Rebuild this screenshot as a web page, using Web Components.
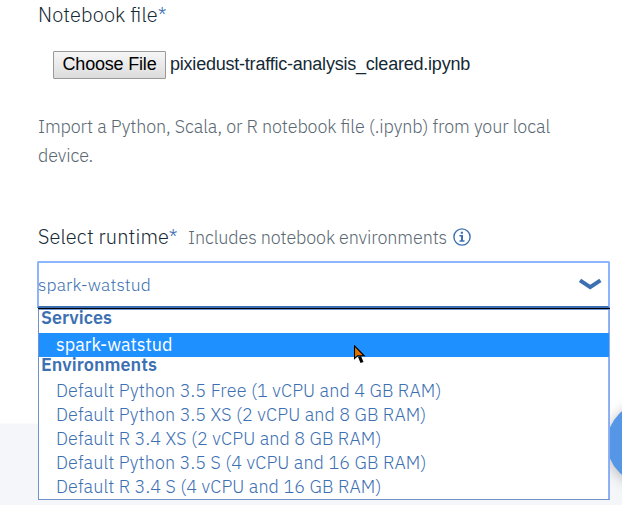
<!DOCTYPE html>
<html lang="en">
<head>
<meta charset="utf-8">
<title>New notebook</title>
<style>
html,body{margin:0;height:100%;overflow:hidden;background:#fff}
body{font-family:"IBM Plex Sans",Roboto,"Liberation Sans",sans-serif;font-weight:300;color:#152935;font-feature-settings:"liga" 1}
</style>
</head>
<body>
<notebook-form></notebook-form>
<script>
// Single line of text whose letter spacing is adjusted to fill a given width.
class FitText extends HTMLElement{
  constructor(){
    super();
    this.attachShadow({mode:'open'}).innerHTML=`<style>:host{display:inline-block;white-space:pre}span{display:inline-block}</style><span><slot></slot></span>`;
  }
  connectedCallback(){
    const s=this.shadowRoot.querySelector('span');
    const n=this.textContent.length,w=+this.getAttribute('width');
    if(w){
      s.style.letterSpacing=((w-s.getBoundingClientRect().width)/n)+'px';
      this.style.width=w+'px';
    }
  }
}
class FilePicker extends HTMLElement{
  constructor(){
    super();
    this.attachShadow({mode:'open'}).innerHTML=`<style>
:host{display:flex;align-items:center;gap:4px;font:400 18px/28px "Liberation Sans",Arial,sans-serif;color:#152935}
button{box-sizing:border-box;width:113px;height:28px;padding:0 0 2px;border:1px solid #999;border-radius:1px;background:linear-gradient(#f6f6f6,#dcdcdc);font:inherit;line-height:24px;color:#000}
fit-text{margin-top:-2px}button fit-text{margin-top:0}
</style><button><fit-text width="94">Choose File</fit-text></button><fit-text width="300">pixiedust-traffic-analysis_cleared.ipynb</fit-text>`;
  }
}
class FieldLabel extends HTMLElement{
  constructor(){
    super();
    this.attachShadow({mode:'open'}).innerHTML=`<style>
:host{display:flex;align-items:baseline;font-size:20px;line-height:30px;color:#152935}
i{font-style:normal;color:#3d70b2;width:10px;font-size:20px;font-weight:300}
::slotted([slot=hint]){margin-left:9px;font-size:18px;color:#5a6872}
</style><slot></slot><i>*</i><slot name="hint"></slot><slot name="icon"></slot>`;
  }
}
class InfoIcon extends HTMLElement{
  constructor(){
    super();
    this.attachShadow({mode:'open'}).innerHTML=`<style>:host{display:block;align-self:center;width:18px;height:18px;margin:-2px 0 0 6px}svg{display:block}</style>
<svg width="18" height="18" viewBox="0 0 18 18"><circle cx="9" cy="9" r="8.1" fill="none" stroke="#3d70b2" stroke-width="1.4"/><path d="M7.8 3.8h2.2v2H7.8zM6.4 7.1H10v5.2h1.5v1.4h-5v-1.4H8V8.5H6.4z" fill="#3d70b2"/></svg>`;
  }
}
class OptionRow extends HTMLElement{
  constructor(){
    super();
    this.attachShadow({mode:'open'}).innerHTML=`<style>
:host{display:block;height:24px;line-height:24px;padding-left:17px;color:#3d70b2}
:host([selected]){background:#1e90ff;color:#fff;font-weight:400}
</style><slot></slot>`;
  }
}
class OptionGroup extends HTMLElement{
  constructor(){
    super();
    this.attachShadow({mode:'open'}).innerHTML=`<style>
:host{display:block}
header{height:var(--head,23px);line-height:16px;padding-left:2px;font-weight:600;color:#3d70b2}
</style><header><slot name="title"></slot></header><slot></slot>`;
  }
}
class RuntimeSelect extends HTMLElement{
  constructor(){
    super();
    this.attachShadow({mode:'open'}).innerHTML=`<style>
:host{display:block;width:573px;font-size:18px;color:#3d70b2}
.value{box-sizing:border-box;height:47px;border:2px solid #8cb4ff;border-bottom-color:#3d70b2;border-radius:2px 2px 0 0;display:flex;align-items:center;justify-content:space-between;padding:0 6px 0 0;background:#fff}
.value fit-text{margin-left:-1px;font-size:17.5px}
svg{display:block}
.list{box-sizing:border-box;margin-left:1px;height:191px;border:1px solid #6f93ca;box-shadow:inset -1px 0 #8cb4ff;background:#fff;border-right-color:#8cabe8}
.rule{height:1px;background:#000;margin-left:1px}
</style>
<div class="value"><fit-text width="113">spark-watstud</fit-text>
<svg width="24" height="14" viewBox="0 0 24 14"><path d="M2 2.3 12.2 9.2 22.4 2.3" fill="none" stroke="#3d70b2" stroke-width="4"/></svg></div>
<div class="rule"></div><div class="list"><slot></slot></div>`;
  }
}
class MousePointer extends HTMLElement{
  constructor(){
    super();
    this.attachShadow({mode:'open'}).innerHTML=`<style>:host{position:absolute;left:354px;top:345px}svg{display:block}</style>
<svg width="12" height="20" viewBox="0 0 12 20"><path d="M5.5 11.5 8 17.5" stroke="#000" stroke-width="3.2"/><path d="M.5.8V13.5L3.6 10.8H10.2Z" fill="#e07000" stroke="#000" stroke-width="1.1"/></svg>`;
  }
}
class NotebookForm extends HTMLElement{
  constructor(){
    super();
    this.attachShadow({mode:'open'}).innerHTML=`<style>
:host{display:flex;flex-direction:column;position:relative;width:622px;height:505px;overflow:hidden}
main{height:425px;flex:none;padding:0 0 0 38px;box-sizing:border-box}
footer{flex:1;background:#f4f6fa;box-shadow:0 -1px 2px #f0f2f8}
file-picker{margin:21px 0 0 15px}
p{margin:33px 0 0;font-size:18px;line-height:29px;color:#5a6872}
p fit-text{display:block}
.runtime{margin-top:52px}
runtime-select{position:relative;z-index:2;margin:8px 0 0 -1px}
.chat{position:absolute;z-index:1;left:607px;top:402px;width:82px;height:82px;border-radius:50%;background:#5596e6;box-shadow:0 2px 14px #0004}
mouse-pointer{z-index:3}
.services{--head:23px}.env{--head:22px}
</style>
<main>
<field-label><fit-text width="120">Notebook file</fit-text></field-label>
<file-picker></file-picker>
<p><fit-text width="512">Import a Python, Scala, or R notebook file (.ipynb) from your local</fit-text><fit-text width="55">device.</fit-text></p>
<field-label class="runtime"><fit-text width="131">Select runtime</fit-text><fit-text slot="hint" width="259">Includes notebook environments</fit-text><info-icon slot="icon"></info-icon></field-label>
<runtime-select>
<option-group class="services"><fit-text slot="title" width="71">Services</fit-text><option-row selected><fit-text width="116.5">spark-watstud</fit-text></option-row></option-group>
<option-group class="env"><fit-text slot="title" width="116">Environments</fit-text>
<option-row><fit-text width="385.5">Default Python 3.5 Free (1 vCPU and 4 GB RAM)</fit-text></option-row>
<option-row><fit-text width="370.5">Default Python 3.5 XS (2 vCPU and 8 GB RAM)</fit-text></option-row>
<option-row><fit-text width="325.5">Default R 3.4 XS (2 vCPU and 8 GB RAM)</fit-text></option-row>
<option-row><fit-text width="370.5">Default Python 3.5 S (4 vCPU and 16 GB RAM)</fit-text></option-row>
<option-row><fit-text width="325.5">Default R 3.4 S (4 vCPU and 16 GB RAM)</fit-text></option-row>
</option-group>
</runtime-select>
</main>
<footer></footer>
<div class="chat"></div>
<mouse-pointer></mouse-pointer>`;
  }
}
for(const [n,c] of [['fit-text',FitText],['file-picker',FilePicker],['info-icon',InfoIcon],['field-label',FieldLabel],['option-row',OptionRow],['option-group',OptionGroup],['runtime-select',RuntimeSelect],['mouse-pointer',MousePointer],['notebook-form',NotebookForm]])customElements.define(n,c);
</script>
</body>
</html>
